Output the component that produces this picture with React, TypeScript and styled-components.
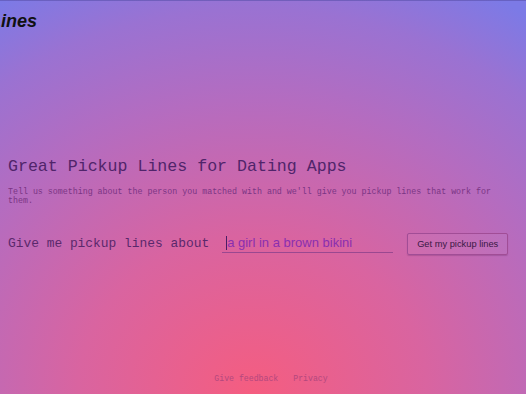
import styled, { createGlobalStyle } from 'styled-components';

const GlobalStyle = createGlobalStyle`
  html, body {
    margin: 0;
    padding: 0;
    height: 100%;
    overflow: hidden;
  }
  body {
    background: radial-gradient(ellipse 95% 115% at 48% 100%, #f55d80 0%, #d964a0 35%, #b46cc0 65%, #9a72d2 85%, #7c7ae6 100%);
    font-family: 'Liberation Mono', 'Courier New', monospace;
  }
`;

export default function App() {
  return (
    <>
      <GlobalStyle />
      <Page>
        <Header>
          <Logo>Pickup Lines</Logo>
        </Header>
        <Main>
          <Title>Great Pickup Lines for Dating Apps</Title>
          <Subtitle>
            Tell us something about the person you matched with and we'll give you pickup lines that work for
            them.
          </Subtitle>
          <PromptRow>
            <PromptLabel>Give me pickup lines about</PromptLabel>
            <InputWrap>
              <TopicInput defaultValue="a girl in a brown bikini" />
              <Caret />
            </InputWrap>
            <SubmitButton>Get my pickup lines</SubmitButton>
          </PromptRow>
        </Main>
        <Footer>
          <FooterLink>Give feedback</FooterLink>
          <FooterLink>Privacy</FooterLink>
        </Footer>
      </Page>
    </>
  );
}

const Page = styled.div`
  height: 100vh;
  display: flex;
  flex-direction: column;
  border-top: 1px solid rgba(90, 80, 170, 0.6);
  box-sizing: border-box;
`;

const Header = styled.header`
  height: 40px;
  display: flex;
  align-items: center;
  overflow: hidden;
`;

const Logo = styled.div`
  font-family: 'Liberation Sans', Arial, sans-serif;
  font-weight: bold;
  font-style: italic;
  font-size: 18px;
  color: #111;
  white-space: nowrap;
  margin-left: -74px;
`;

const Main = styled.main`
  flex: 1;
  display: flex;
  flex-direction: column;
  justify-content: center;
  padding: 0 8px 4px;
`;

const Title = styled.h1`
  margin: 0;
  font-weight: normal;
  font-size: 16.6px;
  line-height: 20px;
  color: #50246a;
`;

const Subtitle = styled.p`
  margin: 10px 0 0;
  font-size: 8.3px;
  line-height: 9.5px;
  color: #7a3584;
  max-width: 500px;
`;

const PromptRow = styled.div`
  display: flex;
  align-items: center;
  margin-top: 27px;
`;

const PromptLabel = styled.span`
  font-size: 12.9px;
  color: #5a286c;
  white-space: nowrap;
`;

const InputWrap = styled.div`
  position: relative;
  margin-left: 13px;
  display: flex;
`;

const TopicInput = styled.input`
  width: 171px;
  box-sizing: border-box;
  background: transparent;
  border: none;
  border-bottom: 1px solid #9a4890;
  padding: 0 0 2px 5px;
  font-family: 'Liberation Sans', Arial, sans-serif;
  font-size: 13px;
  color: #8a2fb0;
  outline: none;
`;

const Caret = styled.span`
  position: absolute;
  left: 4px;
  top: 1px;
  width: 1px;
  height: 14px;
  background: #4a1e66;
`;

const SubmitButton = styled.button`
  margin-left: 14px;
  height: 22px;
  padding: 0 9px;
  white-space: nowrap;
  background: rgba(255, 255, 255, 0.04);
  border: 1px solid #a14d96;
  border-radius: 2px;
  box-shadow: 0 1px 1px rgba(90, 30, 90, 0.25);
  font-family: 'Liberation Sans', Arial, sans-serif;
  font-size: 9.3px;
  color: #3a1844;
  cursor: pointer;
`;

const Footer = styled.footer`
  height: 20px;
  display: flex;
  justify-content: center;
  gap: 15px;
  padding-left: 16px;
  box-sizing: border-box;
`;

const FooterLink = styled.a`
  font-size: 8.2px;
  color: #b4487e;
  cursor: pointer;
`;
